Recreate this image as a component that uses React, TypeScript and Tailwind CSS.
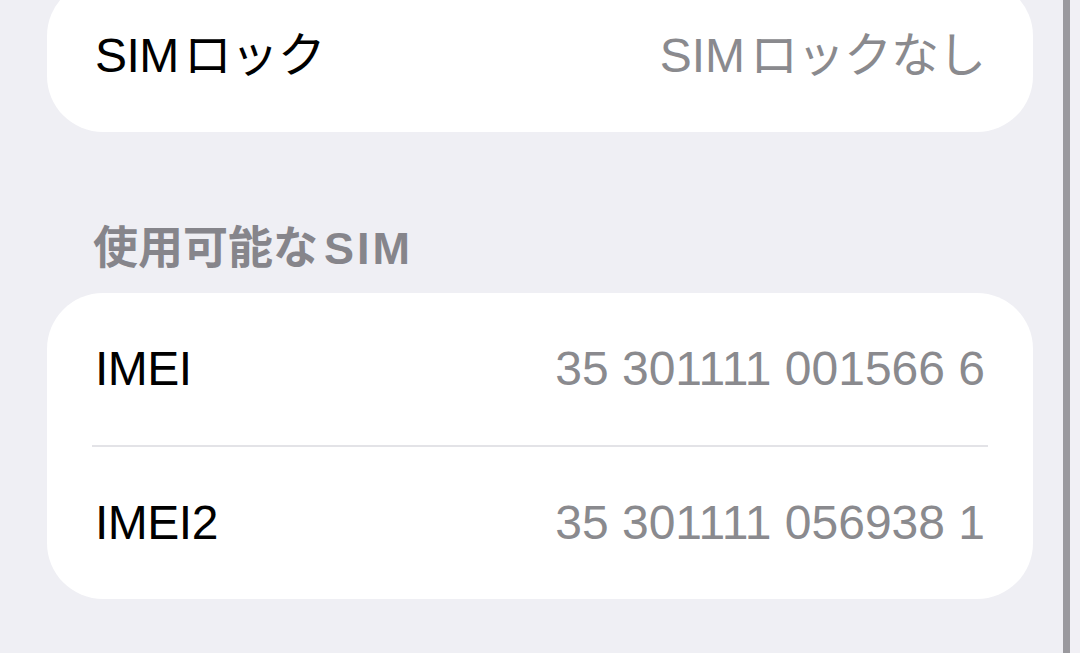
const FONT = "font-['Liberation_Sans','Noto_Sans_CJK_JP',sans-serif]"

type Row = { label: string; value: string }

const simRows: Row[] = [
  { label: 'IMEI', value: '35 301111 001566 6' },
  { label: 'IMEI2', value: '35 301111 056938 1' },
]

// "SIM" followed by kana gets a little air before the katakana, like the system font does
function SimText({ rest }: { rest: string }) {
  return (
    <>
      SIM<span className="ml-[5px] tracking-[-1px]">{rest}</span>
    </>
  )
}

function SettingRow({ label, value }: { label: React.ReactNode; value: React.ReactNode }) {
  return (
    <div className="h-[152px] px-12 flex items-center justify-between">
      <span className="text-[48px] leading-none tracking-[-0.5px] text-black">{label}</span>
      <span className="text-[48px] leading-none text-[#8a8a8e]">{value}</span>
    </div>
  )
}

export default function App() {
  return (
    <main className={`w-[1080px] h-[653px] overflow-hidden bg-[#efeff4] flex ${FONT}`}>
      <div className="w-[1063px] pl-[47px] pr-[30px] flex flex-col">
        {/* SIM lock card, scrolled partly off the top */}
        <div className="-mt-[20px] bg-white rounded-[56px]">
          <SettingRow label={<SimText rest="ロック" />} value={<SimText rest="ロックなし" />} />
        </div>

        {/* section header */}
        <div className="mt-[95px] pl-[46px] h-[66px] text-[45px] leading-[44px] font-bold text-[#86858b]">
          使用可能な<span className="ml-[6px] tracking-[3px]">SIM</span>
        </div>

        <div className="bg-white rounded-[56px]">
          {simRows.map((row, i) => (
            <div key={row.label}>
              {i > 0 && <div className="mx-[45px] h-[2px] bg-[#e3e3e7]" />}
              <SettingRow label={row.label} value={row.value} />
            </div>
          ))}
        </div>
      </div>

      {/* scroll indicator */}
      <div className="w-[7px] bg-[#9a999e]" />
      <div className="flex-1 bg-[#f1f0f5]" />
    </main>
  )
}
